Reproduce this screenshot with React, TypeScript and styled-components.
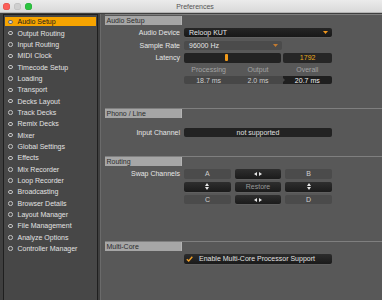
import styled, { createGlobalStyle } from 'styled-components';

const GlobalStyle = createGlobalStyle`
    html, body {
        margin: 0;
        padding: 0;
        background: #3f3f3f;
    }
    body {
        font-family: "Liberation Sans", Arial, sans-serif;
        font-size: 7px;
    }
`;

const menuItems = [
    'Audio Setup', 'Output Routing', 'Input Routing', 'MIDI Clock', 'Timecode Setup',
    'Loading', 'Transport', 'Decks Layout', 'Track Decks', 'Remix Decks', 'Mixer',
    'Global Settings', 'Effects', 'Mix Recorder', 'Loop Recorder', 'Broadcasting',
    'Browser Details', 'Layout Manager', 'File Management', 'Analyze Options', 'Controller Manager'
];

const Window = styled.div`
    width: 382px;
    height: 300px;
    overflow: hidden;
    display: flex;
    flex-direction: column;
    background: #3f3f3f;
`;

const TitleBar = styled.div`
    height: 12px;
    flex-shrink: 0;
    display: grid;
    grid-template-columns: 1fr auto 1fr;
    align-items: center;
    padding-left: 8px;
    background: linear-gradient(#ebebeb, #d9d9d9);
    border-bottom: 1px solid #b5b5b5;
`;

const Lights = styled.div`
    display: flex;
    gap: 4px;
    margin-left: -5px;
`;

const Light = styled.span<{ $c: string; $b: string }>`
    width: 7px;
    height: 7px;
    border-radius: 50%;
    background: ${p => p.$c};
    box-shadow: inset 0 0 0 0.5px ${p => p.$b};
`;

const Title = styled.div`
    font-size: 7px;
    color: #555555;
`;

const Body = styled.div`
    flex: 1;
    display: flex;
    padding: 1px 0 0 3px;
    min-height: 0;
`;

const Sidebar = styled.div`
    width: 95px;
    box-sizing: border-box;
    height: 300px;
    flex-shrink: 0;
    display: flex;
    flex-direction: column;
    gap: 2.35px;
    background: #474747;
    border: 1px solid #1f1f1f;
    padding: 2.3px 1px;
`;

const Item = styled.div<{ $active?: boolean }>`
    height: 9px;
    flex-shrink: 0;
    display: flex;
    align-items: center;
    gap: 5px;
    padding-left: 3px;
    color: ${p => (p.$active ? '#1b1b1b' : '#e2e2e2')};
    background: ${p => (p.$active ? '#f7a400' : 'transparent')};
    white-space: nowrap;
`;

const Bullet = styled.span<{ $active?: boolean }>`
    width: 4.5px;
    height: 4.5px;
    box-sizing: border-box;
    border-radius: 50%;
    border: 1.2px solid ${p => (p.$active ? '#6a6a6a' : '#c4c4c4')};
    background: ${p => (p.$active ? '#d8d8d8' : '#4a4a4a')};
    flex-shrink: 0;
`;

const Main = styled.div`
    flex: 1;
    margin-left: 2px;
    background: #585858;
    border-left: 1px solid #6a6a6a;
    padding-left: 4px;
`;

const Section = styled.section<{ $h: number }>`
    height: ${p => p.$h}px;
    box-sizing: border-box;
    border-top: 1.5px solid #7f7f7f;
`;

const Header = styled.div`
    width: 77px;
    height: 9px;
    margin-top: 0.5px;
    box-sizing: border-box;
    padding-left: 1.5px;
    line-height: 9px;
    color: #2a2a2a;
    background: #a6a6a6;
    border-right: 1px solid #b4b4b4;
`;

const Row = styled.div<{ $mt: number; $h?: number }>`
    display: grid;
    grid-template-columns: 75px 148px;
    column-gap: 4px;
    align-items: start;
    margin-top: ${p => p.$mt}px;
    height: ${p => p.$h ?? 9}px;
`;

const Label = styled.div<{ $h?: number }>`
    text-align: right;
    color: #e6e6e6;
    line-height: ${p => p.$h ?? 9}px;
    white-space: nowrap;
`;

const Select = styled.div<{ $w?: number; $dark?: boolean }>`
    width: ${p => p.$w ?? 148}px;
    height: 100%;
    box-sizing: border-box;
    display: flex;
    align-items: center;
    justify-content: space-between;
    padding: 0 4px 0 5px;
    border-radius: 2px;
    color: #e4e4e4;
    background: ${p => (p.$dark ? 'linear-gradient(#252525, #181818)' : '#4b4b4b')};
    box-shadow: ${p => (p.$dark ? '0 0.5px 0 rgba(255,255,255,0.12)' : 'none')};
`;

const Split = styled.div`
    display: flex;
    gap: 2.3px;
    height: 100%;
`;

const Slider = styled.div`
    width: 97px;
    height: 100%;
    box-sizing: border-box;
    display: flex;
    align-items: center;
    padding-left: 41px;
    border-radius: 2px;
    background: #222222;
`;

const Thumb = styled.span`
    width: 3px;
    height: 7px;
    border-radius: 1px;
    background: #f19a1a;
`;

const ValueBox = styled.div`
    flex: 1;
    height: 100%;
    display: flex;
    align-items: center;
    justify-content: center;
    border-radius: 2px;
    background: #262626;
    color: #e9ab1d;
`;

const Triple = styled.div`
    display: grid;
    grid-template-columns: 1fr 1fr 1fr;
    height: 100%;
`;

const Caption = styled.div`
    text-align: center;
    color: #a2a2a2;
    line-height: 7px;
`;

const Segment = styled.div<{ $last?: boolean }>`
    position: relative;
    display: flex;
    align-items: center;
    justify-content: center;
    color: ${p => (p.$last ? '#f2f2f2' : '#cdcdcd')};
    background: ${p => (p.$last ? '#1f1f1f' : '#474747')};
    border-radius: ${p => (p.$last ? '0 2px 2px 0' : '0')};
    &:first-child {
        border-radius: 2px 0 0 2px;
    }
    ${p => p.$last && `
        &::before {
            content: '';
            position: absolute;
            left: 0;
            top: 50%;
            margin-top: -2.5px;
            border-left: 2.5px solid #474747;
            border-top: 2.5px solid transparent;
            border-bottom: 2.5px solid transparent;
        }
    `}
`;

const Field = styled.div`
    height: 100%;
    display: flex;
    align-items: center;
    justify-content: center;
    border-radius: 2px;
    color: #e0e0e0;
    background: #222222;
`;

const SwapGrid = styled.div`
    display: grid;
    grid-template-columns: repeat(3, 1fr);
    grid-auto-rows: 9.4px;
    gap: 3.5px 3.7px;
`;

const Cell = styled.div<{ $kind: 'plain' | 'button' }>`
    display: flex;
    align-items: center;
    justify-content: center;
    border-radius: 2px;
    color: ${p => (p.$kind === 'plain' ? '#cfcfcf' : '#9a9a9a')};
    background: ${p => (p.$kind === 'plain' ? '#4b4b4b' : 'linear-gradient(#2e2e2e, #1b1b1b)')};
    box-shadow: ${p => (p.$kind === 'plain' ? 'none' : '0 0.5px 0 rgba(255,255,255,0.1)')};
`;

const CheckButton = styled.div`
    height: 10px;
    display: flex;
    align-items: center;
    gap: 6px;
    padding-left: 2px;
    border-radius: 2px;
    color: #e2e2e2;
    background: linear-gradient(#2c2c2c, #1a1a1a);
    box-shadow: 0 0.5px 0 rgba(255,255,255,0.1);
`;

function DownArrow({ color }: { color: string }) {
    return (
        <svg width="5" height="3" viewBox="0 0 5 3">
            <path d="M0 0 L5 0 L2.5 3 Z" fill={color} />
        </svg>
    );
}

function Horizontal() {
    return (
        <svg width="8" height="4" viewBox="0 0 8 4">
            <path d="M0 2 L3 0 L3 4 Z M8 2 L5 0 L5 4 Z" fill="#e6e6e6" />
        </svg>
    );
}

function Vertical() {
    return (
        <svg width="4" height="7" viewBox="0 0 4 7">
            <path d="M2 0 L4 3 L0 3 Z M2 7 L4 4 L0 4 Z" fill="#e6e6e6" />
        </svg>
    );
}

function Check() {
    return (
        <svg width="7" height="6" viewBox="0 0 7 6">
            <path d="M0.8 3.2 L2.7 5 L6.3 0.8" stroke="#f0a02a" strokeWidth="1.4" fill="none" />
        </svg>
    );
}

export default function App() {
    return (
        <>
            <GlobalStyle />
            <Window>
                <TitleBar>
                    <Lights>
                        <Light $c="#fc5f58" $b="#de4a43" />
                        <Light $c="#cfcfcf" $b="#b9b9b9" />
                        <Light $c="#2cc440" $b="#22a933" />
                    </Lights>
                    <Title>Preferences</Title>
                    <span />
                </TitleBar>
                <Body>
                    <Sidebar>
                        {menuItems.map((name, i) => (
                            <Item key={name} $active={i === 0}>
                                <Bullet $active={i === 0} />
                                {name}
                            </Item>
                        ))}
                    </Sidebar>
                    <Main>
                        <Section $h={93.5}>
                            <Header>Audio Setup</Header>
                            <Row $mt={3.2}>
                                <Label>Audio Device</Label>
                                <Select $dark>Reloop KUT<DownArrow color="#f0961c" /></Select>
                            </Row>
                            <Row $mt={4}>
                                <Label>Sample Rate</Label>
                                <Select $w={97.7}>96000 Hz<DownArrow color="#c27a30" /></Select>
                            </Row>
                            <Row $mt={3.4} $h={9.5}>
                                <Label $h={9.5}>Latency</Label>
                                <Split>
                                    <Slider><Thumb /></Slider>
                                    <ValueBox>1792</ValueBox>
                                </Split>
                            </Row>
                            <Row $mt={3.6} $h={7}>
                                <span />
                                <Triple>
                                    <Caption>Processing</Caption>
                                    <Caption>Output</Caption>
                                    <Caption>Overall</Caption>
                                </Triple>
                            </Row>
                            <Row $mt={2.7} $h={8.5}>
                                <span />
                                <Triple>
                                    <Segment>18.7 ms</Segment>
                                    <Segment>2.0 ms</Segment>
                                    <Segment $last>20.7 ms</Segment>
                                </Triple>
                            </Row>
                        </Section>
                        <Section $h={48}>
                            <Header>Phono / Line</Header>
                            <Row $mt={10} $h={9.4}>
                                <Label $h={9.4}>Input Channel</Label>
                                <Field>not supported</Field>
                            </Row>
                        </Section>
                        <Section $h={85}>
                            <Header>Routing</Header>
                            <Row $mt={3.3} $h={36}>
                                <Label $h={9.4}>Swap Channels</Label>
                                <SwapGrid>
                                    <Cell $kind="plain">A</Cell>
                                    <Cell $kind="button"><Horizontal /></Cell>
                                    <Cell $kind="plain">B</Cell>
                                    <Cell $kind="button"><Vertical /></Cell>
                                    <Cell $kind="button">Restore</Cell>
                                    <Cell $kind="button"><Vertical /></Cell>
                                    <Cell $kind="plain">C</Cell>
                                    <Cell $kind="button"><Horizontal /></Cell>
                                    <Cell $kind="plain">D</Cell>
                                </SwapGrid>
                            </Row>
                        </Section>
                        <Section $h={60}>
                            <Header>Multi-Core</Header>
                            <Row $mt={2.6} $h={10}>
                                <span />
                                <CheckButton>
                                    <Check />
                                    Enable Multi-Core Processor Support
                                </CheckButton>
                            </Row>
                        </Section>
                    </Main>
                </Body>
            </Window>
        </>
    );
}
